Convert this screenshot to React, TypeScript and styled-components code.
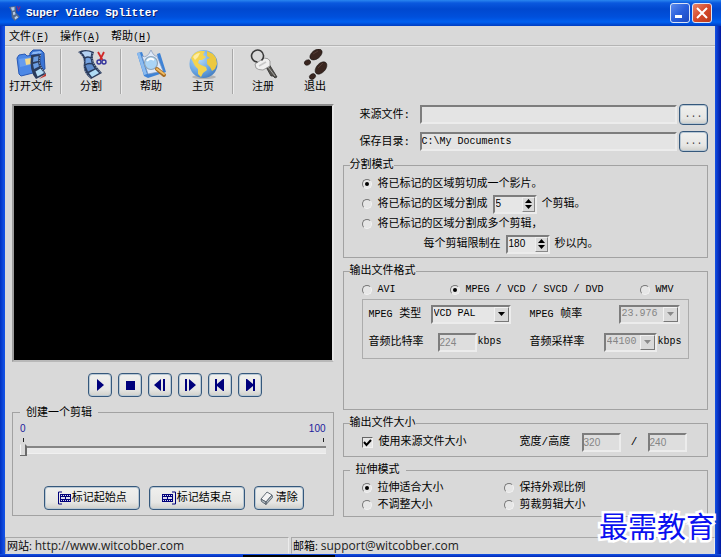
import React from "react";
import styled, { createGlobalStyle, css } from "styled-components";

const MONO = '"Liberation Mono", "Noto Sans CJK SC", monospace';
const SANS = '"Liberation Sans", "Noto Sans CJK SC", sans-serif';
const FACE = "#d9d9d9";
const NAVY = "#00007c";

const GlobalStyle = createGlobalStyle`
  *, *::before, *::after { box-sizing: border-box; }
  body { margin: 0; background: ${FACE}; }
  button, input, select { font: inherit; color: inherit; margin: 0; padding: 0; }
`;

const sunken = css`
  border: 2px solid;
  border-color: #7d7d7d #ececec #ececec #7d7d7d;
  border-radius: 0;
  outline: none;
`;

const Window = styled.div`
  position: relative;
  display: flex;
  flex-direction: column;
  min-height: 100vh;
  font-family: ${MONO};
  font-size: 11px;
  line-height: 14px;
  color: #000;
  background: ${FACE};
  border: solid #0a3fd0;
  border-width: 0 6px 0 5px;
  border-image: linear-gradient(90deg, #0030c0 0, #1250e4 4px, #1250e4 calc(100% - 6px), #0018a0 100%) 0 6 0 5;
`;

const TitleBar = styled.header`
  display: flex;
  align-items: center;
  gap: 5px;
  height: 26px;
  margin: 0 -6px 0 -5px;
  padding: 0 9px;
  background: linear-gradient(#2a86f0 0, #0a58de 3px, #0048cf 9px, #0050dc 17px, #0060f0 22px, #003cc0 100%);
`;

const Title = styled.h1`
  flex: 1;
  margin: 0;
  font-size: 11px;
  font-weight: bold;
  line-height: 14px;
  color: #fff;
  text-shadow: 1px 1px 0 #10206a;
`;

const CaptionButtons = styled.div`
  display: flex;
  gap: 2px;
`;

const CaptionButton = styled.button<{ $close?: boolean }>`
  display: grid;
  place-items: center;
  width: 20px;
  height: 20px;
  border: 1px solid #dbe4f6;
  border-radius: 3px;
  background: ${(p) =>
    p.$close
      ? "linear-gradient(135deg, #e8866a, #d6492a 50%, #b93a1c)"
      : "linear-gradient(135deg, #5d8bec, #2a5fdc 50%, #1c48c0)"};
`;

const MenuBar = styled.nav`
  display: flex;
  gap: 11px;
  height: 20px;
  padding: 3px 4px 0;
  border-bottom: 1px solid #b4b4b4;
  box-shadow: 0 1px 0 #e8e8e8;
`;

const MenuItem = styled.button`
  border: 0;
  background: none;
  line-height: 14px;
  white-space: nowrap;
`;

const Key = styled.span`
  font-size: 10px;
`;

const ToolBar = styled.div`
  display: flex;
  height: 52px;
  padding-top: 3px;
`;

const ToolButton = styled.button`
  display: flex;
  flex-direction: column;
  align-items: center;
  width: 52px;
  height: 45px;
  border: 0;
  background: none;
  line-height: 14px;
  white-space: nowrap;
`;

const ToolDivider = styled.span`
  width: 2px;
  height: 45px;
  margin: 0 3px;
  border-left: 1px solid #a8a8a8;
  border-right: 1px solid #ececec;
`;

const Main = styled.main`
  display: grid;
  grid-template-columns: 322fr 366fr;
  gap: 9px;
  flex: 1;
  align-items: start;
  padding: 6px 7px 20px;
`;

const Column = styled.div`
  display: flex;
  flex-direction: column;
  gap: 6px;
  min-width: 0;
`;

const Video = styled.div`
  aspect-ratio: 322 / 258;
  background: #000;
  border: 2px solid;
  border-color: #8c8c8c #e6e6e6 #b8b8b8 #9c9c9c;
`;

const Transport = styled.div`
  display: flex;
  justify-content: center;
  gap: 6px;
  padding: 5px 0 3px 4px;
`;

const PushButton = styled.button`
  display: flex;
  align-items: center;
  justify-content: center;
  border: 1px solid #35587c;
  border-radius: 4px;
  background: linear-gradient(#f0f0ee, #e6e6e4 70%, #cfcfca);
  box-shadow: inset 0 0 0 1px #b9c8d4;
  white-space: nowrap;
`;

const PlayButton = styled(PushButton)`
  width: 24px;
  height: 24px;
  color: ${NAVY};
`;

const BrowseButton = styled(PushButton)`
  width: 29px;
  height: 21px;
  font-size: 10px;
  color: #444;
`;

const MarkButton = styled(PushButton)`
  height: 24px;
  padding: 0 12px;
`;

const ClearButton = styled(MarkButton)`
  gap: 2px;
  padding: 0 5px;
`;

const Group = styled.fieldset<{ $bottom: number; $side?: number }>`
  min-width: 0;
  margin: 0;
  padding: 2px ${(p) => p.$side ?? 18}px ${(p) => p.$bottom}px;
  border: 1px solid #a2a2a2;
`;

const Legend = styled.legend<{ $inset: number; $pad?: number }>`
  height: 14px;
  margin-left: ${(p) => p.$inset}px;
  padding: 0 ${(p) => p.$pad ?? 0}px;
  line-height: 14px;
`;

const Scale = styled.div`
  display: flex;
  justify-content: space-between;
  font-family: ${SANS};
  font-size: 10px;
  line-height: 14px;
  color: #1c1c9c;
`;

const Ticks = styled.div`
  height: 4px;
  margin: 2px 2px 1px 3px;
  border: solid #222;
  border-width: 0 1px;
`;

const Slider = styled.input`
  display: block;
  width: 100%;
  height: 15px;
  appearance: none;
  background: none;
  &::-webkit-slider-runnable-track {
    height: 8px;
    background: #e9e9e9;
    border-top: 2px solid #858585;
    border-bottom: 1px solid #f0f0f0;
  }
  &::-webkit-slider-thumb {
    appearance: none;
    width: 7px;
    height: 14px;
    margin-top: -6px;
    background: linear-gradient(90deg, #f4f4f4 1px, ${FACE} 1px, ${FACE} 5px, #6a6a6a 5px);
    border-bottom: 1px solid #6a6a6a;
    clip-path: polygon(0 3px, 3px 0, 100% 4px, 100% 100%, 0 100%);
  }
`;

const MarkRow = styled.div`
  display: flex;
  justify-content: center;
  gap: 9px;
  padding: 28px 0 0 2px;
`;

const PathRow = styled.div`
  display: flex;
  align-items: center;
  height: 21px;
  padding-left: 17px;
`;

const PathLabel = styled.label`
  width: 60px;
`;

const PathInput = styled.input`
  ${sunken}
  flex: 1;
  min-width: 0;
  height: 19px;
  margin-right: 2px;
  font-size: 10px;
  background: #e4e4e4;
`;

const Row = styled.div<{ $indent?: number }>`
  display: flex;
  align-items: center;
  gap: 5px;
  height: 20px;
  padding-left: ${(p) => p.$indent ?? 0}px;
  white-space: nowrap;
`;

const Choice = styled.label`
  display: flex;
  align-items: center;
  gap: 6px;
  white-space: nowrap;
`;

const Small = styled.span`
  font-size: 10px;
`;

const Radio = styled.input`
  display: grid;
  place-items: center;
  width: 10px;
  height: 10px;
  appearance: none;
  border: 1px solid;
  border-color: #777 #f2f2f2 #f2f2f2 #777;
  border-radius: 50%;
  background: #e6e6e6;
  &:checked::after {
    content: "";
    width: 4px;
    height: 4px;
    border-radius: 50%;
    background: #000;
  }
`;

const CheckFrame = styled.span`
  display: grid;
  width: 11px;
  height: 11px;
  & > * { grid-area: 1 / 1; }
  & > svg { pointer-events: none; visibility: hidden; z-index: 1; }
  & > input:checked + svg { visibility: visible; }
`;

const CheckBox = styled.input`
  width: 11px;
  height: 11px;
  appearance: none;
  border: 1px solid;
  border-color: #666 #f2f2f2 #f2f2f2 #666;
  background: #e6e6e6;
`;

const SpinFrame = styled.span`
  ${sunken}
  display: flex;
  width: 44px;
  height: 19px;
  background: #e6e6e6;
`;

const SpinInput = styled.input`
  flex: 1;
  min-width: 0;
  border: 0;
  outline: none;
  padding-left: 1px;
  background: none;
  font-family: ${SANS};
  font-size: 10px;
  appearance: textfield;
  &::-webkit-inner-spin-button { appearance: none; }
`;

const SpinButtons = styled.span`
  display: flex;
  flex-direction: column;
  width: 13px;
  background: ${FACE};
  border: 1px solid;
  border-color: #efefef #888 #888 #efefef;
`;

const SpinButton = styled.button`
  display: grid;
  place-items: center;
  flex: 1;
  border: 0;
  background: none;
`;

const FormatRow = styled.div`
  display: grid;
  grid-template-columns: 88px 190px auto;
  align-items: center;
  height: 19px;
`;

const FormatPanel = styled.div`
  display: grid;
  grid-template-columns: 62px 99px 74px 1fr;
  row-gap: 10px;
  align-items: center;
  padding: 5px 0 7px 6px;
  border: 1px solid #acacac;
  white-space: nowrap;
`;

const Cell = styled.div<{ $indent?: number }>`
  display: flex;
  align-items: center;
  gap: 1px;
  height: 18px;
  padding-left: ${(p) => p.$indent ?? 0}px;
`;

const SelectFrame = styled.span<{ $width: number }>`
  position: relative;
  display: block;
  width: ${(p) => p.$width}px;
  height: 19px;
`;

const SelectBox = styled.select`
  ${sunken}
  display: block;
  width: 100%;
  height: 100%;
  padding: 0 0 0 1px;
  appearance: none;
  background: #e6e6e6;
  font-size: 10px;
  &:disabled { color: #858585; opacity: 1; background: #dcdcdc; }
`;

const SelectArrow = styled.span<{ $off?: boolean }>`
  position: absolute;
  top: 2px;
  right: 2px;
  bottom: 2px;
  display: grid;
  place-items: center;
  width: 15px;
  color: ${(p) => (p.$off ? "#8a8a8a" : "#000")};
  background: ${FACE};
  border: 1px solid;
  border-color: #f2f2f2 #777 #777 #f2f2f2;
  pointer-events: none;
`;

const NumberBox = styled.input`
  ${sunken}
  width: 39px;
  height: 19px;
  font-family: ${SANS};
  font-size: 10px;
  background: #dedede;
  &:disabled { color: #858585; }
`;

const SizeRow = styled.div`
  display: grid;
  grid-template-columns: 158px 62px 39px 27px 39px;
  align-items: center;
  height: 20px;
  white-space: nowrap;
`;

const Slash = styled.span`
  text-align: center;
`;

const StretchGrid = styled.div`
  display: grid;
  grid-template-columns: 142px auto;
  grid-auto-rows: 17px;
  align-items: center;
`;

const StatusBar = styled.footer`
  display: grid;
  grid-template-columns: 284fr 424fr;
  gap: 2px;
  height: 17px;
  font-family: "Open Sans", "Noto Sans CJK SC", sans-serif;
  font-size: 11px;
`;

const StatusCell = styled.div`
  padding-left: 1px;
  border: 1px solid;
  border-color: #a8a8a8 #ececec ${FACE} #a8a8a8;
  white-space: nowrap;
  line-height: 15px;
`;

const StatusLink = styled.a`
  color: #222;
  text-decoration: none;
  font-size: 12px;
`;

const BottomEdge = styled.div`
  height: 3px;
  margin: 0 -6px 0 -5px;
  background:
    linear-gradient(90deg, transparent 243px, #000 243px, #000 335px, transparent 335px) 0 1px no-repeat,
    linear-gradient(#1452e6, #0028b4);
`;

const Watermark = styled.div`
  position: absolute;
  right: 0;
  bottom: 15px;
  font-family: "Noto Sans CJK SC", sans-serif;
  font-size: 29px;
  line-height: 34px;
  color: #0a10f0;
  -webkit-text-stroke: 5px #fff;
  paint-order: stroke fill;
  pointer-events: none;
`;

const FilmStrip = () => (
  <g>
    <path d="M2 3 Q9 -1 18 3 Q15 11 20 17 L26 24 L15 30 Q6 23 8 14 Q8 7 2 3Z" fill="#2a3b5c" />
    <path d="M5.500 3.500 Q10 1 15.500 3.500 L14.500 8 Q12 6.500 9 8 Q8 5 5.500 3.500Z" fill="#b4d2f4" />
    <path d="M9.500 9.500 Q12 8 14.500 9.500 L15.500 14 Q13 13 9.500 15Z" fill="#76a4e2" />
    <path d="M9.500 16.500 Q12 14.500 16 15.500 L18.500 19.500 L12 22.500Z" fill="#5f8ccc" />
    <path d="M13 24 L19.500 20.500 L23 24 L16 28Z" fill="#b0dcf6" />
    <path d="M3 3.500 Q8 7 7.800 13 Q6.500 22 15 29" fill="none" stroke="#a8b8d4" strokeWidth="1" strokeDasharray="1 1.500" />
    <path d="M17 4 Q14.500 11 19 17 L25 24" fill="none" stroke="#a8b8d4" strokeWidth="1" strokeDasharray="1 1.500" />
  </g>
);

const OpenIcon = () => (
  <svg width="31" height="31" viewBox="0 0 31 31" aria-hidden="true">
    <path d="M14 4 L17 1 L25 1 L28 4 L29 20 L25 22 L13 22Z" fill="#3974d4" stroke="#2552a8" strokeWidth="1" />
    <path d="M17 3 L24 2 L26 4 L15 6Z" fill="#8cb8f4" />
    <path d="M1 9 L3 6 L9 5 L11 7 L23 5 L25 22 L5 27 L3 25Z" fill="#4c88e6" stroke="#2858b4" strokeWidth="1" />
    <path d="M3 10 L22 7 L23 14 L4 18Z" fill="#7aacf4" opacity=".6" />
    <path d="M9 10 l6 -1 v6 l-5 1Z" fill="#f2d98c" />
    <path d="M15 6 L25 5 Q23 14 26 18 L30 25 L20 30 Q13 22 15 6Z" fill="#2a3b5c" />
    <path d="M17.500 8 L22.500 7 L22 12 L17 13Z M17 15 L22 13.500 L23 17.500 L18 20Z" fill="#6a9ce0" />
    <path d="M19.500 22.500 L24.500 19.500 L28 24 L21.500 27.500Z" fill="#b4dcf4" />
    <path d="M23 30 L30 27 L30 24.500Z" fill="#c03830" />
    <path d="M24.500 6 Q22 14 25 18 L29 25" fill="none" stroke="#a8b8d4" strokeDasharray="1 1.500" />
  </svg>
);

const SplitIcon = () => (
  <svg width="31" height="31" viewBox="0 0 31 31" aria-hidden="true">
    <FilmStrip />
    <path d="M22 3 L26.500 11 M28 3 L24 11" stroke="#d02828" strokeWidth="1.800" fill="none" />
    <circle cx="23" cy="13" r="2" fill="none" stroke="#34349c" strokeWidth="1.400" />
    <circle cx="28" cy="13" r="2" fill="none" stroke="#34349c" strokeWidth="1.400" />
  </svg>
);

const HelpIcon = () => (
  <svg width="31" height="31" viewBox="0 0 31 31" aria-hidden="true">
    <path d="M1 4 L6 3 L12 20 L24 18 L21 5 L24 4 L30 23 L12 29 L8 27Z" fill="#3f83d6" />
    <path d="M1 4 L4 4 L11 25 L8 26Z" fill="#8cbcf0" />
    <path d="M6 7 Q11 10 15 1 Q18 8 21 7 L27 22 L12 25Z" fill="#dfeafa" stroke="#8298ba" strokeWidth=".7" />
    <circle cx="15" cy="14" r="6.500" fill="#a4d2f4" fillOpacity=".9" stroke="#91a4b4" strokeWidth="1.200" />
    <path d="M11 12 Q14 8 18 11" fill="none" stroke="#fff" strokeWidth="2" />
    <path d="M21 20 L28 26" stroke="#a86c20" strokeWidth="4" strokeLinecap="round" />
    <path d="M21 20 L28 25" stroke="#f0bc64" strokeWidth="2" strokeLinecap="round" />
  </svg>
);

const GlobeIcon = () => (
  <svg width="31" height="31" viewBox="0 0 31 31" aria-hidden="true">
    <defs>
      <radialGradient id="sea" cx=".35" cy=".3" r=".8">
        <stop offset="0" stopColor="#b9dcf8" />
        <stop offset=".6" stopColor="#6aa6e2" />
        <stop offset="1" stopColor="#3f78bc" />
      </radialGradient>
    </defs>
    <ellipse cx="16" cy="28" rx="12" ry="2" fill="#b2b2b2" />
    <circle cx="15.500" cy="15" r="14" fill="url(#sea)" />
    <path d="M3 9 Q6 3 12 2 L17 2 L15 6 L18 8 L14 11 L11 11 L10 14 L13 16 L18 18 L19 21 L15 24 L13 28 L10 25 L10 20 L7 17 L5 13Z" fill="#f4d44e" />
    <path d="M19 2 L25 5 L28 9 L29 15 L27 20 L24 22 L22 18 L19 15 L19 10 L22 9 L19 7Z" fill="#ecc840" />
    <path d="M5 8 Q8 4 12 4 L10 8 L7 11Z" fill="#fdeca0" />
  </svg>
);

const KeyIcon = () => (
  <svg width="31" height="31" viewBox="0 0 31 31" aria-hidden="true">
    <path d="M18 18 L21 15 L29 28 L27 29 L25 27 L23 27Z" fill="#55534e" stroke="#2e2e2e" strokeWidth=".8" />
    <path d="M20 18 L27 27" stroke="#bbb" strokeWidth=".8" />
    <path d="M7 15 L16 9 Q21 9 22 12 L22 17 L15 21 Q10 21 8 19Z" fill="#f0f0f0" stroke="#8a8a8a" strokeWidth=".8" />
    <path d="M11 17 L18 13" stroke="#c8c8c8" strokeWidth="1.500" />
    <path d="M9.500 13 A6 6 0 1 1 13.500 11.500" fill="none" stroke="#3a3a3a" strokeWidth="1.600" />
  </svg>
);

const StepsIcon = () => (
  <svg width="31" height="31" viewBox="0 0 31 31" fill="#3a2620" stroke="#15100e" strokeWidth=".5" aria-hidden="true">
    <ellipse cx="16" cy="5.500" rx="7" ry="4.300" transform="rotate(-38 16 5.500)" />
    <ellipse cx="7.500" cy="13.500" rx="3.300" ry="2.600" transform="rotate(-25 7.500 13.500)" />
    <ellipse cx="21" cy="19" rx="7.300" ry="4.500" transform="rotate(-48 21 19)" />
    <ellipse cx="12.500" cy="27.500" rx="3.300" ry="2.600" transform="rotate(-35 12.500 27.500)" />
    <path d="M13 5 L18 2 M18 19 L23 14" stroke="#6d5248" fill="none" />
  </svg>
);

const AppIcon = () => (
  <svg width="12" height="16" viewBox="0 0 31 31" preserveAspectRatio="none" aria-hidden="true">
    <path d="M0 4 L17 2 L18 15 L28 23 L15 31 L7 24 L6 12Z" fill="#566a8c" />
    <path d="M5 5 L14 4 V10 L8 11Z M10 14 L15 13 L17 18 L11 20Z M14 24 L20 21 L24 24 L16 28Z" fill="#b8cce6" />
    <path d="M21 2 L26 12 M29 3 L23 12" stroke="#7c2c80" strokeWidth="3" />
  </svg>
);

const PLAY_SHAPES: [string, string][] = [
  ["播放", "M5 2 L12 8 L5 14Z"],
  ["停止", "M4 4 H13 V13 H4Z"],
  ["后退一帧", "M9 2 V14 L2 8Z M11 2 H13 V14 H11Z"],
  ["前进一帧", "M3 2 H5 V14 H3Z M7 2 L14 8 L7 14Z"],
  ["开头", "M3 2 H5 V7 L11 2 H12 V14 H11 L5 9 V14 H3Z"],
  ["结尾", "M4 2 H5 L11 7 V2 H13 V14 H11 V9 L5 14 H4Z"],
];

const FrameMark = ({ end }: { end?: boolean }) => (
  <svg width="15" height="14" viewBox="0 0 15 14" aria-hidden="true">
    <path d={end ? "M10 1 H13.500 V13 H10" : "M5 1 H1.500 V13 H5"} fill="none" stroke={NAVY} strokeWidth="1" />
    <g transform={end ? "translate(0 0)" : "translate(3 0)"}>
      <path d="M0 3 H11 V11 H0Z" fill={NAVY} />
      <path d="M1 4 h1 v1 h-1z M3 4 h1 v1 h-1z M5 4 h1 v1 h-1z M7 4 h1 v1 h-1z M9 4 h1 v1 h-1z M1 9 h1 v1 h-1z M3 9 h1 v1 h-1z M5 9 h1 v1 h-1z M7 9 h1 v1 h-1z M9 9 h1 v1 h-1z M1 6 h4 v2 h-4z M6 6 h4 v2 h-4z" fill="#dcdcec" />
    </g>
  </svg>
);

const EraserIcon = () => (
  <svg width="14" height="14" viewBox="0 0 14 14" aria-hidden="true">
    <path d="M1 8 L7 1 L12 4 L6 11Z" fill="#f4f4f4" stroke="#55606a" strokeWidth=".9" />
    <path d="M1 8 L6 11 L6 13.500 L1.500 10.500Z M6 11 L12 4 L12.500 6.500 L6 13.500Z" fill="#b4bcc2" stroke="#55606a" strokeWidth=".9" />
  </svg>
);

const Triangle = ({ up }: { up?: boolean }) => (
  <svg width="7" height="4" viewBox="0 0 7 4" aria-hidden="true">
    <path d={up ? "M0 4 L3.500 0 L7 4Z" : "M0 0 H7 L3.500 4Z"} fill="currentColor" />
  </svg>
);

const Spin = ({ value, label }: { value: number; label: string }) => (
  <SpinFrame>
    <SpinInput type="number" defaultValue={value} aria-label={label} />
    <SpinButtons>
      <SpinButton type="button" aria-label="增加"><Triangle up /></SpinButton>
      <SpinButton type="button" aria-label="减少"><Triangle /></SpinButton>
    </SpinButtons>
  </SpinFrame>
);

const DropDown = ({ id, value, width, off }: { id: string; value: string; width: number; off?: boolean }) => (
  <SelectFrame $width={width}>
    <SelectBox id={id} disabled={off} defaultValue={value}>
      <option>{value}</option>
    </SelectBox>
    <SelectArrow $off={off}><Triangle /></SelectArrow>
  </SelectFrame>
);

const Option = ({ name, text, on, small }: { name: string; text: string; on?: boolean; small?: boolean }) => (
  <Choice>
    <Radio type="radio" name={name} defaultChecked={on} />
    {small ? <Small>{text}</Small> : text}
  </Choice>
);

const MENUS = [["文件", "F"], ["操作", "A"], ["帮助", "H"]];

export default function App() {
  return (
    <>
      <GlobalStyle />
      <Window lang="zh-CN">
        <TitleBar>
          <AppIcon />
          <Title>Super Video Splitter</Title>
          <CaptionButtons>
            <CaptionButton aria-label="最小化">
              <svg width="14" height="14"><path d="M2 9 H9 V12 H2Z" fill="#fff" /></svg>
            </CaptionButton>
            <CaptionButton $close aria-label="关闭">
              <svg width="14" height="14"><path d="M2 2 L12 12 M12 2 L2 12" stroke="#fff" strokeWidth="2" /></svg>
            </CaptionButton>
          </CaptionButtons>
        </TitleBar>

        <MenuBar>
          {MENUS.map(([text, key]) => (
            <MenuItem key={key}>{text}<Key>(<u>{key}</u>)</Key></MenuItem>
          ))}
        </MenuBar>

        <ToolBar>
          <ToolButton><OpenIcon />打开文件</ToolButton>
          <ToolDivider />
          <ToolButton><SplitIcon />分割</ToolButton>
          <ToolDivider />
          <ToolButton><HelpIcon />帮助</ToolButton>
          <ToolButton><GlobeIcon />主页</ToolButton>
          <ToolDivider />
          <ToolButton><KeyIcon />注册</ToolButton>
          <ToolButton><StepsIcon />退出</ToolButton>
        </ToolBar>

        <Main>
          <Column>
            <Video />
            <Transport>
              {PLAY_SHAPES.map(([label, d]) => (
                <PlayButton key={label} aria-label={label}>
                  <svg width="16" height="16" viewBox="0 0 16 16"><path d={d} fill="currentColor" /></svg>
                </PlayButton>
              ))}
            </Transport>
            <Group $bottom={5} $side={7}>
              <Legend $inset={0} $pad={6}>创建一个剪辑</Legend>
              <Scale><span>0</span><span>100</span></Scale>
              <Ticks />
              <Slider type="range" min={0} max={100} defaultValue={0} aria-label="剪辑位置" />
              <MarkRow>
                <MarkButton><FrameMark />标记起始点</MarkButton>
                <MarkButton><FrameMark end />标记结束点</MarkButton>
                <ClearButton><EraserIcon />清除</ClearButton>
              </MarkRow>
            </Group>
          </Column>

          <Column>
            <PathRow>
              <PathLabel htmlFor="source">来源文件:</PathLabel>
              <PathInput id="source" type="text" />
              <BrowseButton aria-label="浏览来源文件">...</BrowseButton>
            </PathRow>
            <PathRow>
              <PathLabel htmlFor="target">保存目录:</PathLabel>
              <PathInput id="target" type="text" defaultValue="C:\My Documents" />
              <BrowseButton aria-label="浏览保存目录">...</BrowseButton>
            </PathRow>

            <Group $bottom={3}>
              <Legend $inset={-12}>分割模式</Legend>
              <Row><Option name="split" text="将已标记的区域剪切成一个影片。" on /></Row>
              <Row>
                <Option name="split" text="将已标记的区域分割成" />
                <Spin value={5} label="剪辑数量" />
                个剪辑。
              </Row>
              <Row><Option name="split" text="将已标记的区域分割成多个剪辑，" /></Row>
              <Row $indent={62}>
                每个剪辑限制在
                <Spin value={180} label="剪辑秒数" />
                秒以内。
              </Row>
            </Group>

            <Group $bottom={50}>
              <Legend $inset={-12}>输出文件格式</Legend>
              <FormatRow>
                <Option name="format" text="AVI" small />
                <Option name="format" text="MPEG / VCD / SVCD / DVD" small on />
                <Option name="format" text="WMV" small />
              </FormatRow>
              <FormatPanel>
                <label htmlFor="mpegType"><Small>MPEG</Small> 类型</label>
                <Cell><DropDown id="mpegType" value="VCD PAL" width={80} /></Cell>
                <label htmlFor="frameRate"><Small>MPEG</Small> 帧率</label>
                <Cell $indent={15}><DropDown id="frameRate" value="23.976" width={61} off /></Cell>
                <label htmlFor="bitRate">音频比特率</label>
                <Cell $indent={7}>
                  <NumberBox id="bitRate" type="text" defaultValue="224" disabled />
                  <Small>kbps</Small>
                </Cell>
                <label htmlFor="sampleRate">音频采样率</label>
                <Cell>
                  <DropDown id="sampleRate" value="44100" width={53} off />
                  <Small>kbps</Small>
                </Cell>
              </FormatPanel>
            </Group>

            <Group $bottom={4}>
              <Legend $inset={-12}>输出文件大小</Legend>
              <SizeRow>
                <Choice>
                  <CheckFrame>
                    <CheckBox type="checkbox" defaultChecked />
                    <svg width="11" height="11" viewBox="0 0 11 11"><path d="M2 5 L4.500 8 L9 3" fill="none" stroke="#000" strokeWidth="2" /></svg>
                  </CheckFrame>
                  使用来源文件大小
                </Choice>
                <label htmlFor="width">宽度/高度</label>
                <NumberBox id="width" type="text" defaultValue="320" disabled />
                <Slash>/</Slash>
                <NumberBox type="text" defaultValue="240" disabled aria-label="高度" />
              </SizeRow>
            </Group>

            <Group $bottom={3}>
              <Legend $inset={-12} $pad={6}>拉伸模式</Legend>
              <StretchGrid>
                <Option name="stretch" text="拉伸适合大小" on />
                <Option name="stretch" text="保持外观比例" />
                <Option name="stretch" text="不调整大小" />
                <Option name="stretch" text="剪裁剪辑大小" />
              </StretchGrid>
            </Group>
          </Column>
        </Main>

        <StatusBar>
          <StatusCell>网站: <StatusLink href="http://www.witcobber.com">http://www.witcobber.com</StatusLink></StatusCell>
          <StatusCell>邮箱: <StatusLink href="mailto:support@witcobber.com">support@witcobber.com</StatusLink></StatusCell>
        </StatusBar>
        <BottomEdge />
        <Watermark>最需教育</Watermark>
      </Window>
    </>
  );
}
